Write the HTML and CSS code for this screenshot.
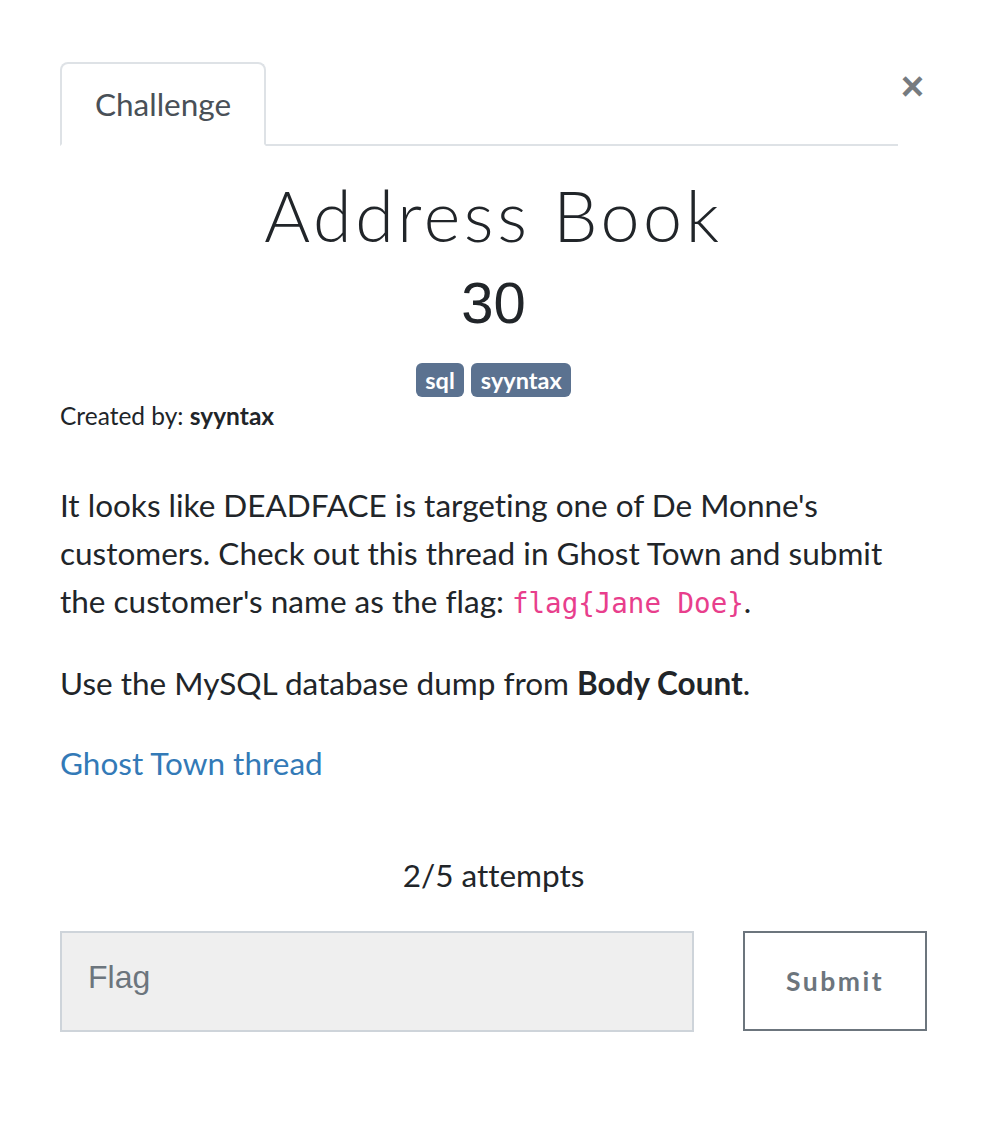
FILE: index.html
```html
<!DOCTYPE html>
<html lang="en">
<head>
<meta charset="utf-8">
<title>Address Book</title>
<link rel="stylesheet" href="styles.css">
</head>
<body>
<div class="modal">
  <div class="header">
    <ul class="tabs">
      <li class="tab">Challenge</li>
    </ul>
    <button class="close" aria-label="Close">&times;</button>
  </div>
  <h2 class="title">Address Book</h2>
  <h3 class="value">30</h3>
  <div class="tags">
    <span class="tag">sql</span>
    <span class="tag">syyntax</span>
  </div>
  <div class="author">Created by: <b>syyntax</b></div>
  <div class="desc">
    <p>It looks like DEADFACE is targeting one of De Monne's customers. Check out this thread in Ghost Town and submit the customer's name as the flag: <code>flag{Jane Doe}</code>.</p>
    <p>Use the MySQL database dump from <b>Body Count</b>.</p>
    <p><a href="#">Ghost Town thread</a></p>
  </div>
  <div class="attempts">2/5 attempts</div>
  <form class="submit-row">
    <input class="flag-input" type="text" placeholder="Flag">
    <button class="submit" type="button">Submit</button>
  </form>
</div>
</body>
</html>
```

FILE: styles.css
```css
html, body {
  margin: 0;
  padding: 0;
  background: #ffffff;
}
body {
  font-family: Lato, "Open Sans", sans-serif;
  color: #212529;
  font-variant-ligatures: none;
}
.modal {
  width: 867px;
  padding: 62px 60px 0 60px;
}
.header {
  display: flex;
  align-items: flex-start;
}
.tabs {
  flex: 1;
  display: flex;
  list-style: none;
  margin: 0;
  padding: 0;
  border-bottom: 2px solid #dee2e6;
}
.tab {
  width: 202px;
  height: 80px;
  margin-bottom: -2px;
  border: 2px solid #dee2e6;
  border-bottom: 2px solid #ffffff;
  border-radius: 8px 8px 0 0;
  background: #fff;
  color: #495057;
  font-size: 31.5px;
  display: flex;
  align-items: center;
  justify-content: center;
  box-sizing: content-box;
}
.close {
  width: 29px;
  margin: 4px 0 0 0;
  padding: 0;
  border: 0;
  background: none;
  color: #767b80;
  font-family: "Liberation Sans", Arial, sans-serif;
  font-weight: 700;
  font-size: 40px;
  line-height: 40px;
  text-align: center;
}
.title {
  margin: 27px 0 0 0;
  text-align: center;
  font-family: Lato, sans-serif;
  font-weight: 300;
  font-size: 70px;
  line-height: 84px;
  letter-spacing: 3.6px;
  color: #212529;
}
.value {
  margin: 11px 0 0 0;
  text-align: center;
  font-family: "Liberation Sans", Arial, sans-serif;
  font-weight: 400;
  font-size: 58px;
  line-height: 70px;
  color: #212529;
}
.tags {
  display: flex;
  justify-content: center;
  gap: 7px;
  margin-top: 25px;
}
.tag {
  background: #5b7290;
  color: #fff;
  font-weight: 700;
  font-size: 23.5px;
  line-height: 34px;
  height: 34px;
  padding: 0 9.5px;
  border-radius: 6px;
}
.author {
  margin-top: 4px;
  font-size: 24.5px;
  line-height: 30px;
  color: #212529;
}
.author b {
  font-weight: 700;
}
.desc {
  margin-top: 50px;
}
.desc p {
  margin: 0 0 32px 0;
  font-size: 31.5px;
  line-height: 48px;
}
.desc p:last-child {
  margin-bottom: 0;
}
.desc code {
  font-family: "DejaVu Sans Mono", "Liberation Mono", monospace;
  font-size: 27.5px;
  color: #e83e8c;
}
.desc a {
  color: #337ab7;
  text-decoration: none;
}
.attempts {
  margin-top: 64px;
  text-align: center;
  font-size: 31.5px;
  line-height: 48px;
}
.submit-row {
  display: flex;
  justify-content: space-between;
  align-items: flex-start;
  margin-top: 32px;
}
.flag-input {
  width: 634px;
  height: 101px;
  box-sizing: border-box;
  border: 2px solid #ced4da;
  background: #efefef;
  padding: 0 26px 8px 26px;
  font-family: "Liberation Sans", Arial, sans-serif;
  font-size: 32px;
  color: #495057;
  outline: none;
  margin: 0;
}
.flag-input::placeholder {
  color: #6c757d;
}
.submit {
  width: 184px;
  height: 100px;
  box-sizing: border-box;
  border: 2px solid #6c757d;
  background: #fff;
  color: #6c757d;
  font-family: Lato, sans-serif;
  font-weight: 700;
  font-size: 26.5px;
  letter-spacing: 2.5px;
  padding: 0;
  margin: 0;
}
```
